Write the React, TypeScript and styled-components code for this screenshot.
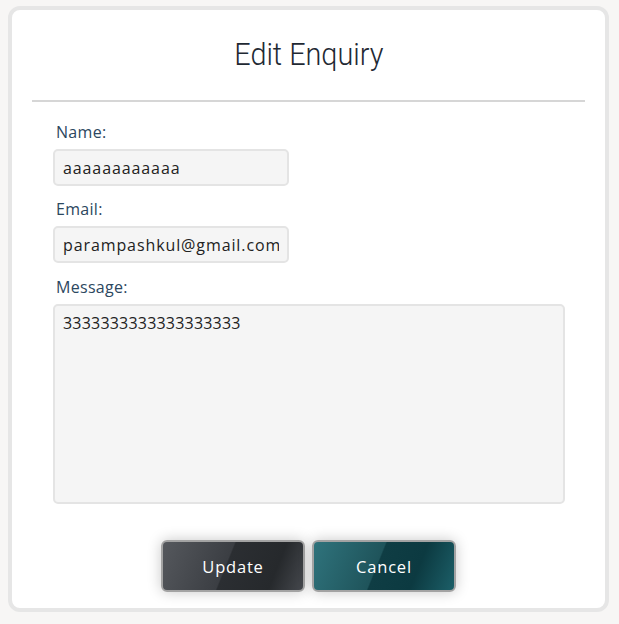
import React from "react";
import styled, { createGlobalStyle } from "styled-components";

const Global = createGlobalStyle`
  html, body { background: #f7f6f5; }
  body { margin: 6px 8px; font-family: "Open Sans", "Noto Sans", sans-serif; }
  * { box-sizing: border-box; }
`;

const Card = styled.div`
  width: 601px;
  height: 606px;
  background: #ffffff;
  border: 4px solid #e6e6e6;
  border-radius: 12px;
  display: flex;
  flex-direction: column;
  padding: 0 20px;
`;

const Title = styled.h2`
  margin: 0;
  height: 90px;
  display: flex;
  align-items: center;
  justify-content: center;
  padding-bottom: 2px;
  font-family: "Roboto", sans-serif;
  font-weight: 300;
  font-size: 32px;
  color: #1f2933;
`;

const TitleText = styled.span`
  display: inline-block;
  transform: scaleX(0.9);
`;

const Divider = styled.hr`
  margin: 0;
  border: none;
  height: 2px;
  background: #d6d6d6;
`;

const Form = styled.form`
  display: flex;
  flex-direction: column;
  padding: 20px 21px 0;
`;

const Label = styled.label`
  font-size: 16px;
  color: #2c4760;
  padding-left: 3px;
  line-height: 21px;
  letter-spacing: 0.3px;
`;

const Field = styled.div<{ $gap: number }>`
  display: flex;
  flex-direction: column;
  gap: 6px;
  margin-bottom: ${(p) => p.$gap}px;
`;

const Input = styled.input`
  width: 236px;
  height: 37px;
  background: #f5f5f5;
  border: 2px solid #e4e4e4;
  border-radius: 5px;
  padding: 0 8px;
  font-family: "Open Sans", sans-serif;
  font-size: 16px;
  letter-spacing: 0.9px;
  color: #222;
  outline: none;
`;

const TextArea = styled.textarea`
  width: 512px;
  height: 200px;
  background: #f5f5f5;
  border: 2px solid #e4e4e4;
  border-radius: 5px;
  padding: 6px 8px;
  font-family: "Open Sans", sans-serif;
  font-size: 16px;
  letter-spacing: 0.2px;
  color: #222;
  resize: none;
  outline: none;
`;

const Actions = styled.div`
  display: flex;
  justify-content: center;
  gap: 7px;
  margin-top: 36px;
`;

const Button = styled.button<{ $variant: "dark" | "teal" }>`
  width: 144px;
  height: 52px;
  border: 2px solid #a3a3a3;
  border-radius: 6px;
  color: #ffffff;
  font-family: "Open Sans", sans-serif;
  font-size: 16.5px;
  letter-spacing: 0.8px;
  box-shadow: 0 0 14px rgba(0, 0, 0, 0.22);
  cursor: pointer;
  background: ${(p) =>
    p.$variant === "dark"
      ? "linear-gradient(112deg, #55585d 0%, #3b3e43 45%, #2b2e32 46%, #26292c 78%, #45484d 100%)"
      : "linear-gradient(112deg, #2f737c 0%, #1f545b 45%, #0f3d44 46%, #0c3a41 72%, #1c5f68 100%)"};
`;

export default function App() {
  return (
    <>
      <Global />
      <Card>
        <Title>
          <TitleText>Edit Enquiry</TitleText>
        </Title>
        <Divider />
        <Form onSubmit={(e) => e.preventDefault()}>
          <Field $gap={13}>
            <Label>Name:</Label>
            <Input defaultValue="aaaaaaaaaaaa" />
          </Field>
          <Field $gap={14}>
            <Label>Email:</Label>
            <Input defaultValue="parampashkul@gmail.com" />
          </Field>
          <Field $gap={0}>
            <Label>Message:</Label>
            <TextArea defaultValue="3333333333333333333" />
          </Field>
          <Actions>
            <Button type="button" $variant="dark">Update</Button>
            <Button type="button" $variant="teal">Cancel</Button>
          </Actions>
        </Form>
      </Card>
    </>
  );
}
